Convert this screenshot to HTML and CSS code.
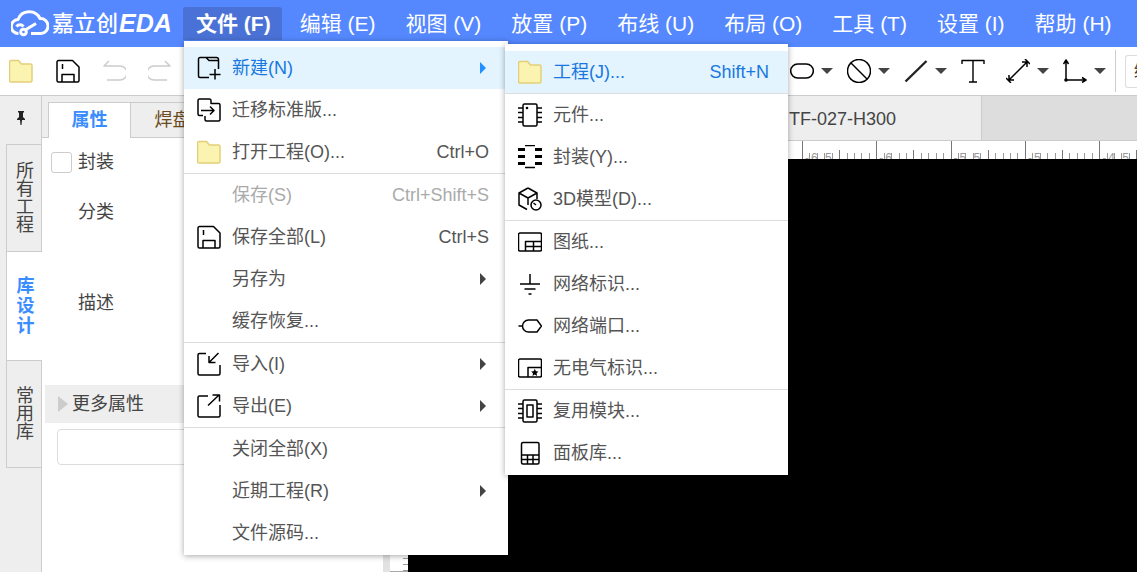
FILE: index.html
```html
<!DOCTYPE html>
<html lang="zh">
<head>
    <meta charset="utf-8">
    <title>嘉立创EDA</title>
    <link rel="stylesheet" href="styles.css">
</head>
<body>
    <svg class="defs" width="0" height="0">
        <defs>
            <symbol id="i-folder" viewBox="0 0 24 24"><path class="folder" d="M2 1.500h7.500l3 3.500h9a1.500 1.500 0 0 1 1.500 1.500v15a1.500 1.500 0 0 1-1.500 1.500H2A1.500 1.500 0 0 1 .5 21V3A1.500 1.500 0 0 1 2 1.500z"/></symbol>
            <symbol id="i-save" viewBox="0 0 24 24"><path d="M1 3a1.500 1.500 0 0 1 1.500-1.500h14L23 8v13.500a1.500 1.500 0 0 1-1.500 1.500h-19A1.500 1.500 0 0 1 1 21.500zM6 23v-7.500h12V23M6.500 5v5"/></symbol>
            <symbol id="i-new" viewBox="0 0 24 24"><path d="M12 21.500H3A1.500 1.500 0 0 1 1.500 20V3A1.500 1.500 0 0 1 3 1.500h16a2 2 0 0 1 2.500 2V13M9 1.500l3 3h9.500M18 13v10.500M12.500 18.500h11"/></symbol>
            <symbol id="i-migrate" viewBox="0 0 24 24"><path d="M6 17.500H2.500A1.500 1.500 0 0 1 1 16V2.500A1.500 1.500 0 0 1 2.500 1h10A1.500 1.500 0 0 1 14 2.500V5.500H21.500A1.500 1.500 0 0 1 23 7v14.500a1.500 1.500 0 0 1-1.500 1.500H9.500A1.500 1.500 0 0 1 8 21.500V18M4 12.500h13M13 8.500l4 4-4 4"/></symbol>
            <symbol id="i-import" viewBox="0 0 24 24"><path d="M9 1.500H2.500A1.500 1.500 0 0 0 1 3v18.500A1.500 1.500 0 0 0 2.500 23h19a1.500 1.500 0 0 0 1.500-1.500V13M21.500 1L12 10.500M12 4v6.500h6.500"/></symbol>
            <symbol id="i-export" viewBox="0 0 24 24"><path d="M11 2H2.500A1.500 1.500 0 0 0 1 3.500v18A1.500 1.500 0 0 0 2.500 23h19a1.500 1.500 0 0 0 1.500-1.500V11M11 11.500L22 1M15.500 1H22.500V7.500"/></symbol>
            <symbol id="i-chip" viewBox="0 0 24 24"><path d="M6.500 1h11A1.500 1.500 0 0 1 19 2.500v19a1.500 1.500 0 0 1-1.500 1.500h-11A1.500 1.500 0 0 1 5 21.500v-19A1.500 1.500 0 0 1 6.500 1zM0 5h5M0 9.500h5M0 14.500h5M0 19h5M19 5h5M19 9.500h5M19 14.500h5M19 19h5"/><circle class="solid" cx="9" cy="5" r="1.300"/></symbol>
            <symbol id="i-footprint" viewBox="0 0 24 24"><path d="M7 .5h10M7 22.500h10"/><path class="thick" d="M0 4.500h7M17 4.500h7M0 11.500h7M17 11.500h7M0 18.500h7M17 18.500h7"/></symbol>
            <symbol id="i-model" viewBox="0 0 24 24"><path d="M10 1l9 5v6M10 1L1 6v12l8 4.500M1 6l9 5 9-5M10 11v7"/><circle cx="18" cy="18" r="5"/><path d="M18 18l-2.500-2"/></symbol>
            <symbol id="i-sheet" viewBox="0 0 24 24"><path d="M2 3h20a1.500 1.500 0 0 1 1.500 1.500v15A1.500 1.500 0 0 1 22 21H2a1.500 1.500 0 0 1-1.500-1.500v-15A1.500 1.500 0 0 1 2 3zM7.500 21v-9.500h16M7.500 16.500h16M15.500 11.500V21"/></symbol>
            <symbol id="i-ground" viewBox="0 0 24 24"><path d="M12 2v10M2 12h20M6.500 17h11M10.500 22h3"/></symbol>
            <symbol id="i-port" viewBox="0 0 24 24"><path d="M.5 12h4M10.500 6H19l4.500 6-4.500 6h-8.500a6 6 0 0 1 0-12z"/></symbol>
            <symbol id="i-noelec" viewBox="0 0 24 24"><path d="M2 3h20a1.500 1.500 0 0 1 1.500 1.500v15A1.500 1.500 0 0 1 22 21H2a1.500 1.500 0 0 1-1.500-1.500v-15A1.500 1.500 0 0 1 2 3zM10 21v-9.500h13.500"/><path class="solid" d="M16.800 12.800l1.100 2.400 2.600.3-1.900 1.800.5 2.600-2.300-1.300-2.300 1.300.5-2.600-1.900-1.800 2.600-.3z"/></symbol>
            <symbol id="i-reuse" viewBox="0 0 24 24"><path d="M6.500 1h11A1.500 1.500 0 0 1 19 2.500v19a1.500 1.500 0 0 1-1.500 1.500h-11A1.500 1.500 0 0 1 5 21.500v-19A1.500 1.500 0 0 1 6.500 1zM9 6h6v12H9zM0 5h5M0 9.500h5M0 14.500h5M0 19h5M19 5h5M19 9.500h5M19 14.500h5M19 19h5"/></symbol>
            <symbol id="i-panel" viewBox="0 0 24 24"><path d="M5 1.500h14.500A1.500 1.500 0 0 1 21 3v18.500a1.500 1.500 0 0 1-1.500 1.500H5a1.500 1.500 0 0 1-1.500-1.500V3A1.500 1.500 0 0 1 5 1.500zM3.500 14H21M3.500 18.500H21M9.500 14v9M15 14v9"/></symbol>
        </defs>
    </svg>

    <header class="topbar">
        <div class="logo">
            <svg class="logo-cloud" viewBox="0 0 38 30"><path d="M7.500 24.500A7 7 0 0 1 7 10.500 12 12 0 0 1 29 9.500a7.500 7.500 0 0 1 1 15H20M5.500 17.500c2-2.500 5-2.500 7 0M15 20.500l10-6"/><circle cx="12.500" cy="23" r="2.800"/></svg>
            <span class="logo-cn">嘉立创</span><span class="logo-en">EDA</span>
        </div>
        <nav class="mainnav">
            <a class="nav-item is-open">文件 (F)</a>
            <a class="nav-item">编辑 (E)</a>
            <a class="nav-item">视图 (V)</a>
            <a class="nav-item">放置 (P)</a>
            <a class="nav-item">布线 (U)</a>
            <a class="nav-item">布局 (O)</a>
            <a class="nav-item">工具 (T)</a>
            <a class="nav-item">设置 (I)</a>
            <a class="nav-item">帮助 (H)</a>
        </nav>
    </header>

    <div class="toolbar">
        <div class="tools">
            <svg class="ico"><use href="#i-folder"/></svg>
            <svg class="ico"><use href="#i-save"/></svg>
            <svg class="ico ico-off" viewBox="0 0 24 24"><path d="M7 2L2 7l5 0M2 7h16a6.500 6.500 0 0 1 0 14H5"/></svg>
            <svg class="ico ico-off" viewBox="0 0 24 24"><path d="M17 2l5 5-5 0M22 7H6a6.500 6.500 0 0 0 0 14h13"/></svg>
        </div>
        <div class="tools tools-right">
            <svg class="ico" viewBox="0 0 24 24"><rect x=".7" y="5" width="22.600" height="14" rx="7"/></svg><i class="caret"></i>
            <svg class="ico" viewBox="0 0 24 24"><circle cx="12" cy="12" r="11.500"/><path d="M4 4l16 16"/></svg><i class="caret"></i>
            <svg class="ico" viewBox="0 0 24 24"><path class="thick-line" d="M1.500 22.500L22.500 2"/></svg><i class="caret"></i>
            <svg class="ico ico-text" viewBox="0 0 24 24"><path d="M1 5V1.500h22V5M12 1.500v21.500M8 23h8"/></svg>
            <svg class="ico" viewBox="0 0 24 24"><path d="M3 21L21 3M16 3h5v5M3 16v5h5M19 0l5 5M0 19l5 5"/></svg><i class="caret"></i>
            <svg class="ico" viewBox="0 0 24 24"><path d="M3 21V1M3 21h20M.5 5L3 1l2.500 4M19 18.500l4 2.500-4 2.500"/><circle class="solid" cx="3" cy="21" r="1.800"/></svg><i class="caret"></i>
            <span class="tool-sep"></span>
            <div class="tool-input"><span>绘</span></div>
        </div>
    </div>

    <div class="workspace">
        <aside class="sidetabs">
            <div class="pin">
                <svg width="12" height="14" viewBox="0 0 12 14"><path d="M3 0h6v1L8 2v4l2 2v1H7l-.5 5h-1L5 9H2V8l2-2V2L3 1z"/></svg>
            </div>
            <a class="sidetab">所有工程</a>
            <a class="sidetab is-active">库设计</a>
            <a class="sidetab">常用库</a>
        </aside>

        <section class="props">
            <div class="props-tabs">
                <a class="props-tab is-active">属性</a>
                <a class="props-tab">焊盘</a>
            </div>
            <div class="props-row row-check"><span class="check"></span>封装</div>
            <div class="props-row row-class">分类</div>
            <div class="props-row row-desc">描述</div>
            <div class="props-more"><i class="more-arrow"></i>更多属性</div>
            <div class="props-input"></div>
        </section>

        <section class="editor">
            <div class="doc-tabs">
                <div class="doc-tab">TF-027-H300</div>
            </div>
            <div class="ruler-top">
                <span>-6.5</span><span>-6</span><span>-5.5</span><span>-5</span><span>-4.5</span>
            </div>
            <div class="canvas-row">
                <div class="splitter"></div>
                <div class="ruler-left"></div>
                <div class="canvas"></div>
            </div>
        </section>
    </div>

    <div class="menu menu-file">
        <div class="mi is-hover"><svg class="mi-ico"><use href="#i-new"/></svg><span class="mi-text">新建(N)</span><i class="arrow"></i></div>
        <div class="mi"><svg class="mi-ico"><use href="#i-migrate"/></svg><span class="mi-text">迁移标准版...</span></div>
        <div class="mi"><svg class="mi-ico"><use href="#i-folder"/></svg><span class="mi-text">打开工程(O)...</span><span class="mi-key">Ctrl+O</span></div>
        <div class="mi-sep"></div>
        <div class="mi is-off"><span class="mi-ico"></span><span class="mi-text">保存(S)</span><span class="mi-key">Ctrl+Shift+S</span></div>
        <div class="mi"><svg class="mi-ico"><use href="#i-save"/></svg><span class="mi-text">保存全部(L)</span><span class="mi-key">Ctrl+S</span></div>
        <div class="mi"><span class="mi-ico"></span><span class="mi-text">另存为</span><i class="arrow"></i></div>
        <div class="mi"><span class="mi-ico"></span><span class="mi-text">缓存恢复...</span></div>
        <div class="mi-sep"></div>
        <div class="mi"><svg class="mi-ico"><use href="#i-import"/></svg><span class="mi-text">导入(I)</span><i class="arrow"></i></div>
        <div class="mi"><svg class="mi-ico"><use href="#i-export"/></svg><span class="mi-text">导出(E)</span><i class="arrow"></i></div>
        <div class="mi-sep"></div>
        <div class="mi"><span class="mi-ico"></span><span class="mi-text">关闭全部(X)</span></div>
        <div class="mi"><span class="mi-ico"></span><span class="mi-text">近期工程(R)</span><i class="arrow"></i></div>
        <div class="mi"><span class="mi-ico"></span><span class="mi-text">文件源码...</span></div>
    </div>

    <div class="menu menu-new">
        <div class="mi is-hover"><svg class="mi-ico"><use href="#i-folder"/></svg><span class="mi-text">工程(J)...</span><span class="mi-key">Shift+N</span></div>
        <div class="mi-sep"></div>
        <div class="mi"><svg class="mi-ico"><use href="#i-chip"/></svg><span class="mi-text">元件...</span></div>
        <div class="mi"><svg class="mi-ico"><use href="#i-footprint"/></svg><span class="mi-text">封装(Y)...</span></div>
        <div class="mi"><svg class="mi-ico"><use href="#i-model"/></svg><span class="mi-text">3D模型(D)...</span></div>
        <div class="mi-sep"></div>
        <div class="mi"><svg class="mi-ico"><use href="#i-sheet"/></svg><span class="mi-text">图纸...</span></div>
        <div class="mi"><svg class="mi-ico"><use href="#i-ground"/></svg><span class="mi-text">网络标识...</span></div>
        <div class="mi"><svg class="mi-ico"><use href="#i-port"/></svg><span class="mi-text">网络端口...</span></div>
        <div class="mi"><svg class="mi-ico"><use href="#i-noelec"/></svg><span class="mi-text">无电气标识...</span></div>
        <div class="mi-sep"></div>
        <div class="mi"><svg class="mi-ico"><use href="#i-reuse"/></svg><span class="mi-text">复用模块...</span></div>
        <div class="mi"><svg class="mi-ico"><use href="#i-panel"/></svg><span class="mi-text">面板库...</span></div>
    </div>
</body>
</html>
```

FILE: styles.css
```css
* { box-sizing: border-box; }
html, body { height: 100%; }
body { margin: 0; overflow: hidden; display: flex; flex-direction: column; background: #fff; color: #444; font-family: "Liberation Sans", "Noto Sans CJK SC", sans-serif; font-size: 18px; line-height: 24px; }
.defs { position: absolute; }
svg { fill: none; stroke: #000; stroke-width: 1.5; stroke-linejoin: round; display: block; }
.solid { fill: #000; stroke: none; }
.thick { stroke-width: 3.2; }
.thick-line { stroke-width: 2.4; stroke: #222; }
.folder { fill: #fbf3b0; stroke: #e3cf78; }

/* top bar */
.topbar { height: 47px; flex: none; display: flex; background: #5588ff; color: #fff; }
.logo { width: 183px; flex: none; display: flex; align-items: center; padding-left: 11px; }
.logo-cloud { width: 38px; height: 30px; stroke: #fff; stroke-width: 3; margin-right: 3px; }
.logo-cn { font-size: 22px; font-weight: 500; line-height: 1; }
.logo-en { font-size: 25px; font-style: italic; font-weight: bold; line-height: 1; margin-left: 1px; }
.mainnav { display: flex; gap: 6px; padding-top: 7px; }
.nav-item { height: 33px; padding: 0 12px; font-size: 21px; line-height: 33px; white-space: nowrap; }
.nav-item.is-open { padding: 0 11px 0 13px; background: #4a72d6; font-weight: bold; border-radius: 3px 3px 0 0; }

/* toolbar */
.toolbar { height: 49px; flex: none; display: flex; align-items: center; justify-content: space-between; padding-left: 9px; border-bottom: 1px solid #ccc; overflow: hidden; }
.tools { display: flex; align-items: center; gap: 23px; }
.tools-right { gap: 0; }
.ico { width: 24px; height: 24px; }
.ico-off { stroke: #ccc; margin-left: -1px; }
.ico-text { margin-right: 21px; stroke-width: 1.4; }
.caret { width: 0; height: 0; margin: 0 14px 0 7px; border: solid transparent; border-width: 6px 6px 0; border-top-color: #444; }
.tools-right .caret:nth-last-of-type(1) { margin-right: 9px; }
.tool-sep { width: 1px; height: 42px; background: #ccc; margin-right: 9px; }
.tool-input { width: 12px; height: 33px; padding-left: 8px; border: 1px solid #ddd; border-right: 0; border-radius: 3px 0 0 3px; overflow: hidden; line-height: 30px; white-space: nowrap; }

/* left side */
.workspace { flex: 1; display: flex; min-height: 0; }
.sidetabs { width: 42px; flex: none; background: #eee; border-right: 1px solid #ccc; padding-left: 6px; }
.pin { height: 48px; display: flex; justify-content: center; padding: 15px 6px 0 0; }
.pin svg { fill: #222; stroke: none; }
.sidetab { display: flex; align-items: center; justify-content: center; width: 36px; height: 108px; padding: 0 6px 0 8px; border: 1px solid #ccc; line-height: 18px; text-align: center; color: #444; }
.sidetab.is-active { background: #fff; color: #3a8dff; font-weight: bold; line-height: 20px; border-width: 0 0 0 1px; }

.props { width: 341px; flex: none; position: relative; z-index: 1; }
.props-tabs { height: 42px; display: flex; padding: 6px 0 0 6px; background: #eee; border-bottom: 1px solid #ccc; }
.props-tab { width: 83px; height: 36px; padding-top: 5px; border-top: 1px solid #ccc; text-align: center; color: #6b4a20; }
.props-tab.is-active { background: #fff; color: #3a8dff; font-weight: bold; border: 1px solid #ccc; border-bottom: 0; }
.props-row { display: flex; align-items: center; }
.row-check { padding: 12px 0 0 9px; gap: 6px; }
.check { width: 21px; height: 21px; border: 1px solid #ccc; border-radius: 3px; }
.row-class { padding: 26px 0 0 36px; }
.row-desc { padding: 67px 0 0 36px; }
.props-more { height: 38px; margin: 70px 0 0 3px; padding-left: 13px; display: flex; align-items: center; background: #eee; }
.more-arrow { width: 0; height: 0; margin-right: 4px; border: solid transparent; border-width: 8px 0 8px 10px; border-left-color: #ccc; }
.props-input { height: 36px; margin: 6px 0 0 15px; border: 1px solid #ddd; border-radius: 4px; }

/* editor */
.editor { flex: 1; min-width: 0; display: flex; flex-direction: column; }
.doc-tabs { height: 45px; flex: none; background: #ddd; border-bottom: 1px solid #ccc; }
.doc-tab { width: 599px; height: 44px; padding: 11px 0 0 406px; background: #eee; border-right: 1px solid #ccc; color: #444; white-space: nowrap; }
.ruler-top { height: 18px; flex: none; margin-left: 25px; display: flex; overflow: hidden; padding-left: 394px; font-size: 12px; letter-spacing: 2px; color: #999;
    background:
        repeating-linear-gradient(90deg, #777 0 1px, transparent 1px 74.3px) 394px 0 no-repeat,
        repeating-linear-gradient(90deg, #777 0 1px, transparent 1px 37.15px) 394px 9px no-repeat,
        repeating-linear-gradient(90deg, #999 0 1px, transparent 1px 7.43px) 394px 12px no-repeat; }
.ruler-top span { width: 74.3px; flex: none; padding: 10px 0 0 3px; line-height: 14px; }
.canvas-row { flex: 1; display: flex; min-height: 0; }
.splitter { width: 7px; flex: none; background: #e2e2e2; }
.ruler-left { width: 18px; flex: none; background: repeating-linear-gradient(0deg, #999 0 1px, transparent 1px 6px) right / 5px 100% no-repeat #fff; border-bottom: 1px solid #aaa; }
.canvas { flex: 1; background: #000; }

/* menus */
.menu { position: absolute; background: #fff; box-shadow: 0 1px 6px rgba(0, 0, 0, .35); color: #555; z-index: 10; }
.menu-file { left: 184px; top: 41px; width: 324px; padding: 6px 0 1px; }
.menu-new { left: 505px; top: 44px; width: 283px; padding: 7px 0 1px; z-index: 11; }
.mi { height: 42px; display: flex; align-items: center; padding-left: 13px; white-space: nowrap; }
.mi-ico { width: 24px; height: 24px; flex: none; margin-right: 11px; }
.mi-text { flex: 1; }
.mi-key { padding-right: 19px; }
.mi.is-hover { background: #e3f4ff; color: #1878e0; }
.mi.is-off { color: #aaa; }
.mi-sep { height: 1px; background: #ddd; }
.arrow { width: 0; height: 0; margin-right: 22px; border: solid transparent; border-width: 6px 0 6px 6px; border-left-color: #444; }
.is-hover .arrow { border-left-color: #1e90ff; }
```
